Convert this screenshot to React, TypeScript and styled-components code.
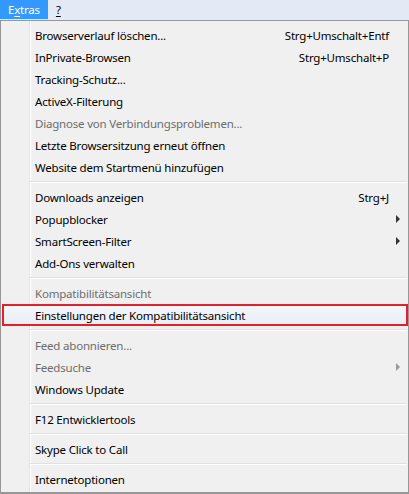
import styled, { createGlobalStyle } from 'styled-components';

const GlobalStyle = createGlobalStyle`
  html, body {
    margin: 0;
    padding: 0;
    background: #f0f0f0;
  }
  body {
    font-family: "Noto Sans", "DejaVu Sans", sans-serif;
    font-size: 11.5px;
    letter-spacing: -0.2px;
  }
`

const Window = styled.div`
  width: 409px;
  height: 494px;
  display: flex;
  flex-direction: column;
  overflow: hidden;
`

const MenuBar = styled.div`
  height: 20px;
  display: flex;
  background: #e4eaf5;
`

const MenuTitle = styled.div<{ $open?: boolean }>`
  height: 19px;
  padding: 0 8px;
  display: flex;
  align-items: center;
  color: ${p => (p.$open ? '#ffffff' : '#000000')};
  background: ${p => (p.$open ? '#3399ff' : 'transparent')};
`

const Key = styled.span`
  text-decoration: underline;
  text-underline-offset: 2px;
`

// left gutter with the etched line at x 28/29 inside the border
const Dropdown = styled.div`
  flex: 1;
  border: 1px solid #979797;
  border-bottom-width: 2px;
  padding: 3px 0 1px;
  background:
    linear-gradient(to right,
      #f0f0f0 0, #f0f0f0 28px,
      #e2e3e3 28px, #e2e3e3 29px,
      #ffffff 29px, #ffffff 30px,
      #f0f0f0 30px);
`

const Item = styled.div<{ $disabled?: boolean; $marked?: boolean }>`
  height: 22px;
  display: flex;
  align-items: center;
  padding-left: 34px;
  color: ${p => (p.$disabled ? '#6d6d6d' : '#000000')};
  ${p => p.$marked && `
    margin: 0 0 0 1px;
    padding-left: 33px;
    background: linear-gradient(#f4f6fa, #e9eef6);
    box-shadow: inset 0 0 0 2px #e2202c;
  `}
`

const Label = styled.span`
  flex: 1;
  white-space: nowrap;
`

const Shortcut = styled.span`
  white-space: nowrap;
`

const ArrowSlot = styled.span`
  width: 19px;
  height: 22px;
  display: flex;
  align-items: center;
  padding-left: 7px;
  box-sizing: border-box;
`

const Arrow = styled.span<{ $disabled?: boolean }>`
  width: 0;
  height: 0;
  border-top: 4px solid transparent;
  border-bottom: 4px solid transparent;
  border-left: 4px solid ${p => (p.$disabled ? '#9a9a9a' : '#333333')};
`

const Separator = styled.div`
  height: 8px;
  margin-left: 29px;
  margin-right: 1px;
  display: flex;
  flex-direction: column;
  justify-content: center;

  &::before {
    content: '';
    height: 1px;
    background: #e0e0e0;
  }
  &::after {
    content: '';
    height: 1px;
    background: #ffffff;
  }
`

type Entry =
  | { sep: true }
  | { label: string; shortcut?: string; sub?: boolean; disabled?: boolean; marked?: boolean };

const entries: Entry[] = [
  { label: 'Browserverlauf löschen...', shortcut: 'Strg+Umschalt+Entf' },
  { label: 'InPrivate-Browsen', shortcut: 'Strg+Umschalt+P' },
  { label: 'Tracking-Schutz...' },
  { label: 'ActiveX-Filterung' },
  { label: 'Diagnose von Verbindungsproblemen...', disabled: true },
  { label: 'Letzte Browsersitzung erneut öffnen' },
  { label: 'Website dem Startmenü hinzufügen' },
  { sep: true },
  { label: 'Downloads anzeigen', shortcut: 'Strg+J' },
  { label: 'Popupblocker', sub: true },
  { label: 'SmartScreen-Filter', sub: true },
  { label: 'Add-Ons verwalten' },
  { sep: true },
  { label: 'Kompatibilitätsansicht', disabled: true },
  { label: 'Einstellungen der Kompatibilitätsansicht', marked: true },
  { sep: true },
  { label: 'Feed abonnieren...', disabled: true },
  { label: 'Feedsuche', sub: true, disabled: true },
  { label: 'Windows Update' },
  { sep: true },
  { label: 'F12 Entwicklertools' },
  { sep: true },
  { label: 'Skype Click to Call' },
  { sep: true },
  { label: 'Internetoptionen' },
];

export default function App() {
  return (
    <Window>
      <GlobalStyle />
      <MenuBar>
        <MenuTitle $open>E<Key>x</Key>tras</MenuTitle>
        <MenuTitle><Key>?</Key></MenuTitle>
      </MenuBar>
      <Dropdown>
        {entries.map((e, i) =>
          'sep' in e ? (
            <Separator key={i} />
          ) : (
            <Item key={i} $disabled={e.disabled} $marked={e.marked}>
              <Label>{e.label}</Label>
              {e.shortcut && <Shortcut>{e.shortcut}</Shortcut>}
              <ArrowSlot>{e.sub && <Arrow $disabled={e.disabled} />}</ArrowSlot>
            </Item>
          )
        )}
      </Dropdown>
    </Window>
  );
}
